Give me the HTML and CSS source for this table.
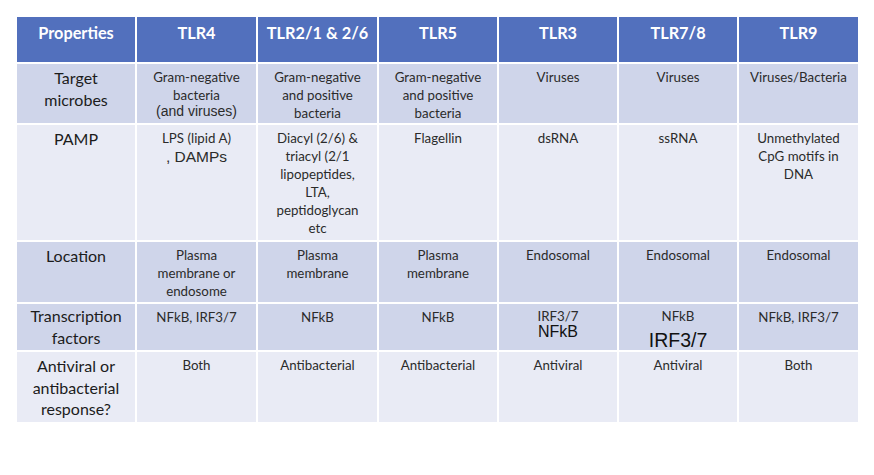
FILE: index.html
```html
<!DOCTYPE html>
<html>
<head>
<meta charset="utf-8">
<link rel="stylesheet" href="styles.css">
</head>
<body>
<div class="page">
<table class="tlr">
  <colgroup>
    <col class="c1"><col class="c2"><col class="c3"><col class="c4"><col class="c5"><col class="c6"><col class="c7">
  </colgroup>
  <thead>
    <tr class="head">
      <th>Properties</th><th>TLR4</th><th>TLR2/1 &amp; 2/6</th><th>TLR5</th><th>TLR3</th><th>TLR7/8</th><th>TLR9</th>
    </tr>
  </thead>
  <tbody>
    <tr class="r-target dark">
      <td class="label">Target<br>microbes</td>
      <td>Gram-negative<br>bacteria<span class="blk arial tight">(and viruses)</span></td>
      <td>Gram-negative<br>and positive<br>bacteria</td>
      <td>Gram-negative<br>and positive<br>bacteria</td>
      <td>Viruses</td>
      <td>Viruses</td>
      <td>Viruses/Bacteria</td>
    </tr>
    <tr class="r-pamp light">
      <td class="label">PAMP</td>
      <td>LPS (lipid A)<span class="blk arial damps">, DAMPs</span></td>
      <td>Diacyl (2/6) &amp;<br>triacyl (2/1<br>lipopeptides,<br>LTA,<br>peptidoglycan<br>etc</td>
      <td>Flagellin</td>
      <td>dsRNA</td>
      <td>ssRNA</td>
      <td>Unmethylated<br>CpG motifs in<br>DNA</td>
    </tr>
    <tr class="r-loc dark">
      <td class="label">Location</td>
      <td>Plasma<br>membrane or<br>endosome</td>
      <td>Plasma<br>membrane</td>
      <td>Plasma<br>membrane</td>
      <td>Endosomal</td>
      <td>Endosomal</td>
      <td>Endosomal</td>
    </tr>
    <tr class="r-tf dark">
      <td class="label">Transcription<br>factors</td>
      <td>NFkB, IRF3/7</td>
      <td>NFkB</td>
      <td>NFkB</td>
      <td><span class="blk l1">IRF3/7</span><span class="blk arial big big-a">NFkB</span></td>
      <td><span class="blk l1">NFkB</span><span class="blk arial big big-b">IRF3/7</span></td>
      <td>NFkB, IRF3/7</td>
    </tr>
    <tr class="r-resp light">
      <td class="label">Antiviral or<br>antibacterial<br>response?</td>
      <td>Both</td>
      <td>Antibacterial</td>
      <td>Antibacterial</td>
      <td>Antiviral</td>
      <td>Antiviral</td>
      <td>Both</td>
    </tr>
  </tbody>
</table>
</div>
</body>
</html>
```

FILE: styles.css
```css
html, body {
  margin: 0;
  padding: 0;
  background: #ffffff;
}
.page {
  padding: 15px 0 0 15px;
}
.tlr {
  table-layout: fixed;
  width: 843px;
  border-collapse: collapse;
  font-family: "Lato", "Open Sans", sans-serif;
  color: #2b2b2b;
}
.c1 { width: 120px; }
.c2, .c3 { width: 121px; }
.c4, .c5, .c6 { width: 120px; }
.c7 { width: 121px; }
.tlr th, .tlr td {
  border: 2px solid #ffffff;
  text-align: center;
  vertical-align: top;
  padding: 0 3px;
}
.tlr th {
  background: #5270bd;
  color: #ffffff;
  font-weight: bold;
  font-size: 16.3px;
  line-height: 20px;
  padding-top: 6px;
  height: 39px;
}
.tlr td {
  font-size: 13.3px;
  line-height: 18px;
  padding-top: 4px;
}
.tlr td.label {
  font-size: 16px;
  line-height: 21.5px;
  color: #1c1c1c;
  padding-top: 3px;
}
.dark td { background: #cfd5ea; }
.light td { background: #e9ebf5; }
.r-target td { height: 55px; }
.r-pamp td { height: 111px; }
.r-loc td { height: 56px; }
.r-tf td { height: 42px; }
.r-tf td.label { padding-top: 1px; }
.r-resp td { height: 66px; }
.blk { display: block; }
.arial {
  font-family: "Liberation Sans", Arial, sans-serif;
  font-size: 14px;
}
.tight { line-height: 14px; }
.damps { font-size: 15.5px; line-height: 20px; }
.big {
  color: #111;
}
.big-a { font-size: 16px; line-height: 16px; }
.big-b { font-size: 19.5px; line-height: 20px; margin-top: 6px; }
.l1 { font-size: 13.3px; line-height: 16px; }
```
